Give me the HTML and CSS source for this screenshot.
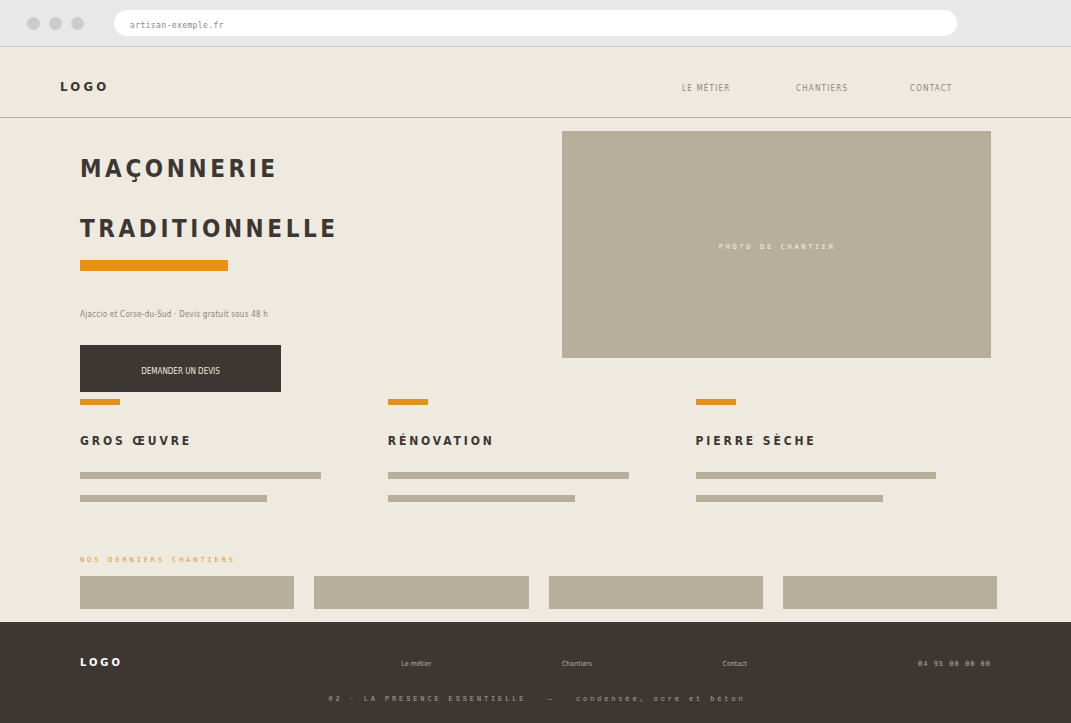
FILE: index.html
```html
<!DOCTYPE html>
<html lang="fr">
<head>
<meta charset="utf-8">
<meta name="viewport" content="width=device-width, initial-scale=1">
<title>Maçonnerie traditionnelle</title>
<link rel="stylesheet" href="styles.css">
</head>
<body>
<div class="chrome">
  <div class="dots"><span class="dot"></span><span class="dot"></span><span class="dot"></span></div>
  <input class="address" type="text" aria-label="Adresse" value="artisan-exemple.fr">
</div>
<header class="header">
  <a class="logo" href="#">LOGO</a>
  <nav class="nav">
    <a class="nav-link" href="#metier">LE MÉTIER</a>
    <a class="nav-link" href="#chantiers">CHANTIERS</a>
    <a class="nav-link" href="#contact">CONTACT</a>
  </nav>
</header>
<main class="main">
  <section class="hero">
    <div class="hero-text">
      <h1 class="title">MAÇONNERIE<br>TRADITIONNELLE</h1>
      <div class="title-bar"></div>
      <p class="tagline">Ajaccio et Corse-du-Sud · Devis gratuit sous 48 h</p>
      <button class="cta" type="button">DEMANDER UN DEVIS</button>
    </div>
    <div class="photo"><span class="photo-label">PHOTO DE CHANTIER</span></div>
  </section>
  <section class="services" id="metier">
    <article class="service">
      <h2 class="service-title">GROS ŒUVRE</h2>
      <div class="line line-long"></div>
      <div class="line line-short"></div>
    </article>
    <article class="service">
      <h2 class="service-title">RÉNOVATION</h2>
      <div class="line line-long"></div>
      <div class="line line-short"></div>
    </article>
    <article class="service">
      <h2 class="service-title">PIERRE SÈCHE</h2>
      <div class="line line-long"></div>
      <div class="line line-short"></div>
    </article>
  </section>
  <section class="works" id="chantiers">
    <h2 class="works-title">NOS DERNIERS CHANTIERS</h2>
    <div class="gallery">
      <div class="thumb"></div>
      <div class="thumb"></div>
      <div class="thumb"></div>
      <div class="thumb"></div>
    </div>
  </section>
</main>
<footer class="footer" id="contact">
  <div class="footer-row">
    <a class="footer-logo" href="#">LOGO</a>
    <nav class="footer-nav">
      <a class="footer-link" href="#metier">Le métier</a>
      <a class="footer-link" href="#chantiers">Chantiers</a>
      <a class="footer-link" href="#contact">Contact</a>
    </nav>
    <a class="phone" href="tel:+33495000000">04 95 00 00 00</a>
  </div>
  <p class="caption">02 · LA PRÉSENCE ESSENTIELLE &nbsp; — &nbsp; condensée, ocre et béton</p>
</footer>
</body>
</html>
```
FILE: styles.css
```css
:root {
  --paper: #eeeadf;
  --ink: #3d3733;
  --stone: #b8ae9c;
  --ochre: #e89010;
  --muted: #8c8577;
  --sans: "DejaVu Sans Condensed", "DejaVu Sans", sans-serif;
  --mono: "DejaVu Sans Mono", monospace;
}
* { box-sizing: border-box; }
body {
  margin: 0;
  min-height: 100vh;
  display: flex;
  flex-direction: column;
  background: var(--paper);
  color: var(--ink);
  font-family: var(--sans);
}
a { color: inherit; text-decoration: none; }
h1, h2, p { margin: 0; }

.chrome {
  display: flex;
  align-items: center;
  gap: 30px;
  height: 47px;
  padding: 0 114px 0 27px;
  background: #e8e8e8;
  border-bottom: 1px solid #cbcbc6;
}
.dots { display: flex; gap: 9px; }
.dot { width: 13px; height: 13px; border-radius: 50%; background: #ccc; }
.address {
  flex: 1;
  min-width: 0;
  height: 26px;
  padding: 4px 16px 0;
  border: 0;
  border-radius: 13px;
  background: #fff;
  color: #888;
  font: 8px var(--mono);
  letter-spacing: 0.05em;
}

.header {
  display: flex;
  align-items: center;
  justify-content: space-between;
  height: 71px;
  padding: 8px 47px 0 60px;
  border-bottom: 1px solid #b5ad9f;
}
.logo { font-size: 13px; font-weight: bold; letter-spacing: 0.25em; }
.nav { display: grid; grid-template-columns: repeat(3, 114px); padding-top: 4px; }
.nav-link { font-size: 8px; letter-spacing: 0.15em; color: var(--muted); }

.main { padding: 13px 74px 13px 80px; }
.hero {
  display: flex;
  justify-content: space-between;
  align-items: flex-start;
  padding-right: 6px;
}
.hero-text { padding-top: 8px; }
.title { font-size: 24px; line-height: 60px; letter-spacing: 0.15em; }
.title-bar { width: 148px; height: 11px; margin-top: 1px; background: var(--ochre); }
.tagline { margin-top: 37px; font-size: 8px; line-height: 14px; letter-spacing: 0.03em; color: var(--muted); }
.cta {
  display: block;
  width: 201px;
  height: 47px;
  margin-top: 23px;
  padding: 6px 0 0;
  border: 0;
  background: var(--ink);
  color: var(--paper);
  font: 8px var(--sans);
}
.photo {
  display: flex;
  align-items: center;
  justify-content: center;
  width: calc(40vw + 1px);
  height: 227px;
  background: var(--stone);
}
.photo-label { padding: 4px 0 0 2px; font: 7px var(--mono); letter-spacing: 0.38em; color: #f4f1ea; }

.services { display: grid; grid-template-columns: repeat(3, 25vw); gap: 40px; margin-top: 7px; }
.service::before { content: ""; display: block; width: 40px; height: 6px; background: #e29120; }
.service-title { margin: 26px 0 21px; font-size: 12px; line-height: 20px; letter-spacing: 0.24em; }
.line { height: 7px; background: var(--stone); }
.line-long { width: 90%; }
.line-short { width: 70%; margin-top: 16px; }

.works { margin-top: 52px; }
.works-title { font: 7px/12px var(--mono); letter-spacing: 0.41em; color: #e29a38; }
.gallery { display: grid; grid-template-columns: repeat(4, 1fr); gap: 20px; margin-top: 10px; }
.thumb { height: 33px; background: var(--stone); }

.footer { flex: 1; padding: 31px 80px 0; background: var(--ink); color: #b5ad9f; }
.footer-row { display: grid; grid-template-columns: 30vw 1fr auto; align-items: center; height: 18px; }
.footer-logo { font-size: 11px; font-weight: bold; letter-spacing: 3px; color: #fff; }
.footer-nav { display: grid; grid-template-columns: repeat(3, 15vw); padding-top: 4px; font-size: 7px; }
.phone { padding-top: 4px; font: 7px var(--mono); letter-spacing: 1px; }
.caption {
  margin-top: 22px;
  padding-left: 3px;
  font: 7px/12px "Liberation Mono", monospace;
  letter-spacing: 0.41em;
  text-align: center;
  color: #aea698;
}
```
